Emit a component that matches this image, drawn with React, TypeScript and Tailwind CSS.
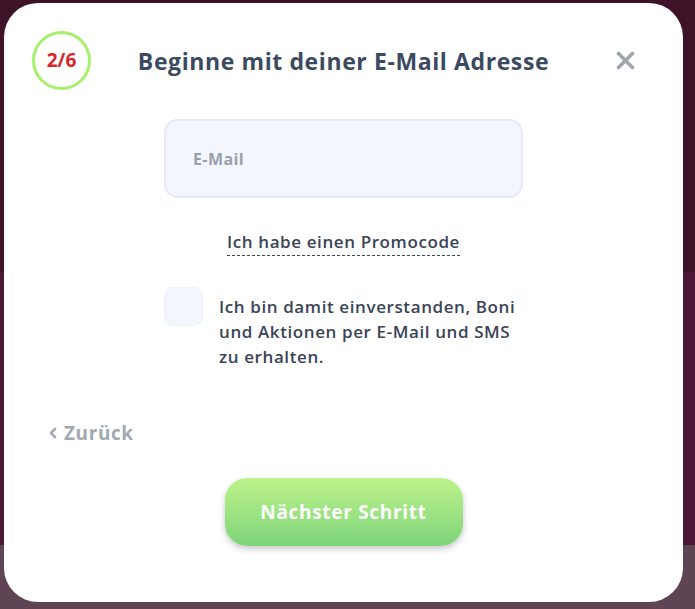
import { useState } from 'react';

export default function App() {
    const [email, setEmail] = useState('');
    const [agree, setAgree] = useState(false);

    return (
        <div className="relative w-[695px] h-[609px] overflow-hidden font-['Open_Sans',sans-serif]">
            {/* Backdrop */}
            <div className="flex flex-col h-full">
                <div className="h-[272px] bg-[#3e1328]" />
                <div className="h-[273px] bg-[#4c1836]" />
                <div className="flex-1 bg-[#5f4553]" />
            </div>

            {/* Modal */}
            <div className="absolute left-[4px] top-[3px] w-[679px] h-[599px] rounded-[34px] bg-white flex flex-col px-[28px] pt-[28px]">
                {/* Header */}
                <div className="grid grid-cols-[59px_1fr_59px] items-center">
                    <div className="w-[59px] h-[59px] rounded-full border-[3.5px] border-[#a7f06b] flex items-center justify-center">
                        <span className="text-[19px] font-bold text-[#d9262b] leading-none">2/6</span>
                    </div>
                    <h1 className="text-center text-[23px] font-bold tracking-[0.6px] text-[#3b4a60] leading-[30px]">
                        Beginne mit deiner E-Mail Adresse
                    </h1>
                    <button className="flex items-center justify-center">
                        <svg width="19" height="19" viewBox="0 0 19 19">
                            <path d="M2.5 2.5 L16.5 16.5 M16.5 2.5 L2.5 16.5" stroke="#a0a5ae" strokeWidth="3.6" strokeLinecap="round" />
                        </svg>
                    </button>
                </div>

                {/* Email */}
                <div className="mx-auto mt-[29px] w-[359px]">
                    <input
                        type="email"
                        placeholder="E-Mail"
                        value={email}
                        onChange={(e) => setEmail(e.target.value)}
                        className="w-full h-[79px] rounded-[14px] bg-[#f3f7fd] border-2 border-[#e6eaf8] px-[27px] text-[16px] font-bold tracking-[0.4px] text-[#3b4a60] placeholder-[#9a9fac] outline-none"
                    />
                </div>

                {/* Promo */}
                <div className="mt-[32px] flex justify-center">
                    <span className="text-[17px] font-semibold tracking-[0.6px] leading-[23px] text-[#3a4456] pb-[2px] border-b border-dashed border-[#3a4456]">
                        Ich habe einen Promocode
                    </span>
                </div>

                {/* Consent */}
                <div className="mx-auto mt-[31px] w-[359px] flex items-start gap-[16px]">
                    <button
                        onClick={() => setAgree(!agree)}
                        className="shrink-0 w-[39px] h-[39px] rounded-[9px] bg-[#f3f7fd] border border-[#eef2fb]"
                    />
                    <p className="mt-[7px] text-[17px] font-semibold tracking-[0.6px] leading-[25px] text-[#3a4456]">
                        Ich bin damit einverstanden, Boni und Aktionen per E-Mail und SMS zu erhalten.
                    </p>
                </div>

                {/* Back */}
                <div className="mt-[51px] pl-[17px]">
                    <button className="flex items-center gap-[7px] text-[19px] font-bold tracking-[0.6px] leading-[26px] text-[#a3a8b2]">
                        <svg width="8" height="12" viewBox="0 0 8 12">
                            <path d="M6 1.8 L2 6 L6 10.2" stroke="#a3a8b2" strokeWidth="2.6" fill="none" strokeLinecap="round" strokeLinejoin="round" />
                        </svg>
                        Zurück
                    </button>
                </div>

                {/* Next */}
                <div className="mt-[32px] flex justify-center">
                    <button className="w-[238px] h-[68px] rounded-[22px] bg-gradient-to-b from-[#bdf28a] to-[#7dd57c] shadow-[0_3px_6px_rgba(0,0,0,0.22)] text-white text-[19px] font-bold tracking-[0.7px]">
                        Nächster Schritt
                    </button>
                </div>
            </div>
        </div>
    );
}
